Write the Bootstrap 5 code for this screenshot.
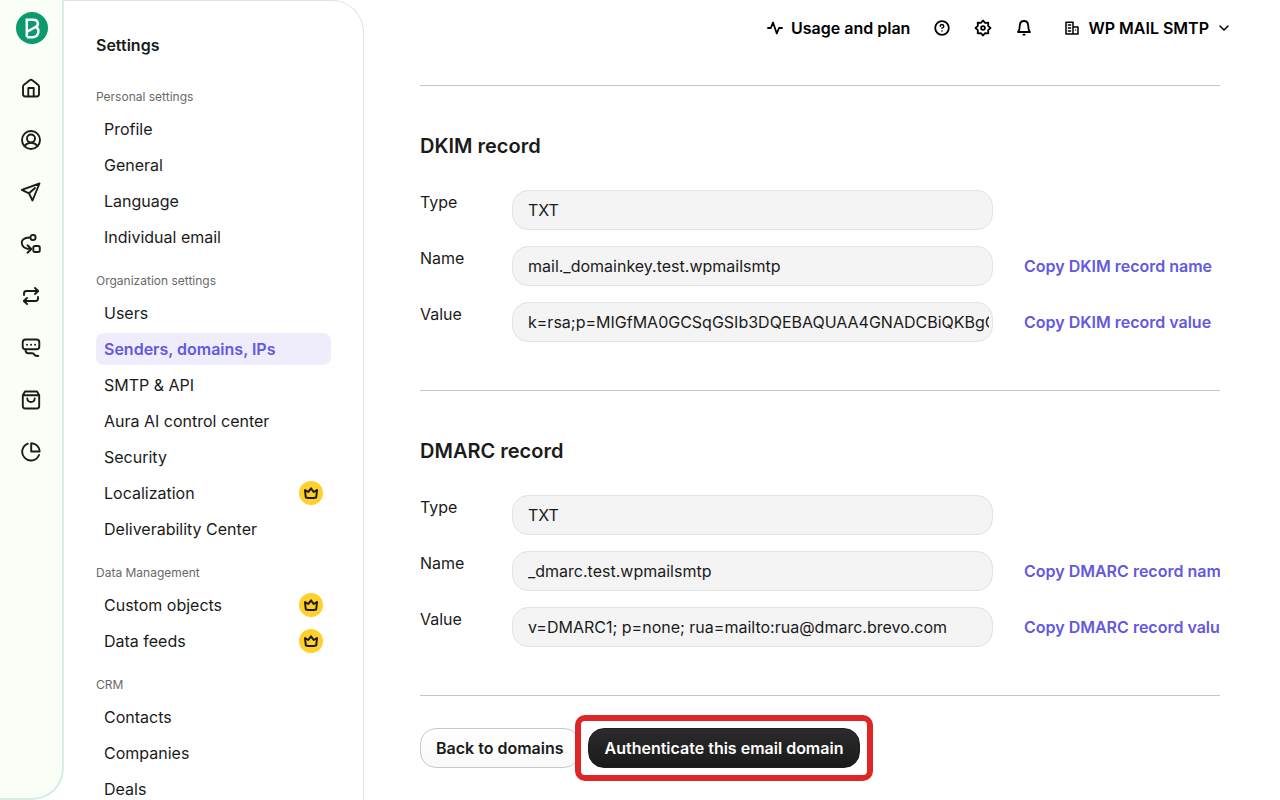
<!DOCTYPE html>
<html lang="en">
<head>
<meta charset="utf-8">
<meta name="viewport" content="width=device-width, initial-scale=1">
<title>Senders, domains, IPs</title>
<link href="https://cdn.jsdelivr.net/npm/bootstrap@5.3.0/dist/css/bootstrap.min.css" rel="stylesheet">
<style>
  body { font-family: Inter, "Liberation Sans", sans-serif; font-size: 16px; line-height: 24px; color: #1b1b1b; background: #fff; }
  svg { display: block; fill: none; stroke: currentColor; stroke-linecap: round; stroke-linejoin: round; }
  a { color: inherit; text-decoration: none; }
  .rail { width: 64px; background: #f9fff6; border: solid #d5ede4; border-width: 0 2px 2px 0; border-radius: 0 0 32px 0; padding: 12px 16px; }
  .rail-nav { gap: 32px; margin-top: 34px; }
  .rail-nav svg { stroke-width: 1.9; }
  .settings { width: 300px; border: solid #e1e1e1; border-width: 1px 1px 0 0; border-radius: 0 32px 0 0; padding: 32px 32px 0; }
  .settings h1 { font-size: 16px; font-weight: 600; line-height: 24px; margin-bottom: 28px; }
  .settings h2 { font-size: 12px; font-weight: 400; line-height: 24px; color: #696969; margin: 0 0 4px; }
  .group { margin-bottom: 16px; gap: 4px; }
  .group .nav-link { height: 32px; padding: 4px 8px; border-radius: 8px; color: #1b1b1b; }
  .group .nav-link.active { background: #efedfc; color: #6358de; font-weight: 600; }
  .crown { width: 24px; height: 24px; background: #ffd02b; }
  .topbar { height: 56px; padding-right: 49px; font-weight: 600; color: #000; }
  .topbar button { background: none; border: 0; padding: 0; color: inherit; font-weight: 600; }
  .topbar svg { stroke-width: 1.8; }
  .tools { gap: 23px; margin: 0 31px 0 23px; }
  .page-body { padding: 29px 60px 0 56px; }
  .rule { border: 0; border-top: 1px solid #bccad6; opacity: 1; margin: 0; }
  .record { padding: 48px 0; }
  .record h2 { font-size: 20px; font-weight: 600; line-height: 24px; margin-bottom: 32px; }
  .fields { gap: 16px; }
  .fields label { flex: 0 0 92px; }
  .fields .form-control { flex: 0 0 481px; height: 40px; background: #f4f4f4; border-color: #e3e3e3; border-radius: 16px; padding: 7px 3px 7px 15px; color: #1b1b1b; }
  .copy { min-width: 0; margin-left: 31px; overflow: hidden; white-space: nowrap; color: #6358de; font-weight: 600; line-height: 40px; }
  .actions { gap: 8px; padding-top: 32px; }
  .actions .btn { height: 40px; border-radius: 16px; font-weight: 600; padding: 7px 15px; }
  .actions .btn-back { border-color: #c8c8c8; background: linear-gradient(#fff, #f9f9f9); color: #1b1b1b; }
  .actions .btn-auth { border-color: #1f1f1f; background: linear-gradient(#2b2b2b, #1a1a1a); color: #fff; padding: 7px 16px; }
  .highlight::before { content: ""; position: absolute; inset: -13px; border: 6px solid #dd2727; border-radius: 10px; background: #fff; }
  .highlight .btn { position: relative; }
</style>
</head>
<body>
<svg class="d-none"><symbol id="crown" viewBox="0 0 16 16"><path d="M2 5 2.800 12.500Q8 13.700 13.200 12.500L14 5 10.700 7 8 3.300 5.300 7Z"/></symbol></svg>
<div class="d-flex vh-100 overflow-hidden">
  <aside class="rail flex-shrink-0">
    <a href="#" aria-label="Brevo" class="d-block"><svg width="32" height="32" viewBox="0 0 32 32"><circle cx="16" cy="16" r="16" fill="#0b996e" stroke="none"/><path d="M10.800 25V7.700H17.500C22.500 7.700 23.300 13.200 19.500 15L10.800 19.800M19 15C24.800 16.700 22.800 25.200 16.500 25.200H10.800" stroke="#fff" stroke-width="2.500" stroke-linejoin="miter" stroke-linecap="butt"/></svg></a>
    <nav class="rail-nav d-flex flex-column align-items-start ps-1">
      <a href="#" aria-label="Home"><svg width="22" height="20" viewBox="0 0 22 20"><path d="M3 8.500V16Q3 18.500 5.500 18.500H16.500Q19 18.500 19 16V8.500Q19 7.700 18.300 7.100L12.300 2.200Q11 1.300 9.700 2.200L3.700 7.100Q3 7.700 3 8.500ZM8.300 18.500V10H13.700V18.500"/></svg></a>
      <a href="#" aria-label="Contacts"><svg width="22" height="20" viewBox="0 0 22 20"><circle cx="11" cy="10" r="9"/><circle cx="11" cy="8.500" r="4"/><path d="M4.500 16Q7 12.700 11 12.700T17.500 16"/></svg></a>
      <a href="#" aria-label="Campaigns"><svg width="22" height="20" viewBox="0 0 22 20"><path d="M19.500 1.500 1.800 7.800 9 11.300 12.500 18.500ZM9 11.300 15 6"/></svg></a>
      <a href="#" aria-label="Automations"><svg width="22" height="20" viewBox="0 0 22 20"><circle cx="13" cy="3.500" r="2.600"/><path d="M10.200 3.500C3.500 3.300 1.500 6.500 1.800 9 2 12.500 4.500 15 10.500 15M7.500 11.300 11.300 15 7.500 18.700"/><rect x="13.300" y="12" width="6.500" height="6" rx="1.800"/></svg></a>
      <a href="#" aria-label="Transactional"><svg width="22" height="20" viewBox="0 0 22 20"><path d="M4 9V7.500Q4 5 6.500 5H18M15 2 18.200 5 15 8M18 11V12.500Q18 15 15.500 15H4M7 12 3.800 15 7 18"/></svg></a>
      <a href="#" aria-label="Conversations"><svg width="22" height="20" viewBox="0 0 22 20"><path d="M5.500 1.500H16.500Q19.300 1.500 19.300 4.300V8.500Q19.300 11.300 16.500 11.300H5.500Q2.700 11.300 2.700 8.500V4.300Q2.700 1.500 5.500 1.500ZM5.500 11.500V12Q5.500 15 8 15.200H12Q14 15.200 14.500 17 15.500 18 18.300 18M7 6.700h.1M11 6.700h.1M15 6.700h.1"/></svg></a>
      <a href="#" aria-label="Commerce"><svg width="22" height="20" viewBox="0 0 22 20"><path d="M2.800 5.200 5 1.500H17L19.200 5.200V16Q19.200 18.500 16.700 18.500H5.300Q2.800 18.500 2.800 16ZM2.800 5.200H19.200M7.300 8.500Q7.500 12 11 12T14.700 8.500"/></svg></a>
      <a href="#" aria-label="Statistics"><svg width="22" height="20" viewBox="0 0 22 20"><path d="M7.800 1.700A8.700 8.700 0 1 0 19 13M11.200 1.300A8.500 8.500 0 0 1 19.700 9.500H11.200Z"/></svg></a>
    </nav>
  </aside>

  <aside class="settings flex-shrink-0 overflow-hidden">
    <h1>Settings</h1>
    <h2>Personal settings</h2>
    <nav class="group nav flex-column">
      <a class="nav-link" href="#">Profile</a>
      <a class="nav-link" href="#">General</a>
      <a class="nav-link" href="#">Language</a>
      <a class="nav-link" href="#">Individual email</a>
    </nav>
    <h2>Organization settings</h2>
    <nav class="group nav flex-column">
      <a class="nav-link" href="#">Users</a>
      <a class="nav-link active" href="#" aria-current="page">Senders, domains, IPs</a>
      <a class="nav-link" href="#">SMTP &amp; API</a>
      <a class="nav-link" href="#">Aura AI control center</a>
      <a class="nav-link" href="#">Security</a>
      <a class="nav-link d-flex justify-content-between" href="#">Localization <span class="crown rounded-circle d-flex align-items-center justify-content-center"><svg width="16" height="16" stroke-width="2"><use href="#crown"/></svg></span></a>
      <a class="nav-link" href="#">Deliverability Center</a>
    </nav>
    <h2>Data Management</h2>
    <nav class="group nav flex-column">
      <a class="nav-link d-flex justify-content-between" href="#">Custom objects <span class="crown rounded-circle d-flex align-items-center justify-content-center"><svg width="16" height="16" stroke-width="2"><use href="#crown"/></svg></span></a>
      <a class="nav-link d-flex justify-content-between" href="#">Data feeds <span class="crown rounded-circle d-flex align-items-center justify-content-center"><svg width="16" height="16" stroke-width="2"><use href="#crown"/></svg></span></a>
    </nav>
    <h2>CRM</h2>
    <nav class="group nav flex-column">
      <a class="nav-link" href="#">Contacts</a>
      <a class="nav-link" href="#">Companies</a>
      <a class="nav-link" href="#">Deals</a>
    </nav>
  </aside>

  <div class="flex-grow-1 overflow-hidden">
    <header class="topbar d-flex align-items-center justify-content-end">
      <button type="button" class="d-flex align-items-center gap-2"><svg width="16" height="16" viewBox="0 0 16 16"><path d="M1 8H3.800L6 2.500 9.800 13.500 12 8H15"/></svg>Usage and plan</button>
      <div class="tools d-flex">
        <button type="button" aria-label="Help"><svg width="18" height="18" viewBox="0 0 18 18"><circle cx="9" cy="9" r="6.800"/><path d="M7.200 7.200Q7.400 5.600 9 5.600 10.800 5.700 10.800 7.200 10.700 8.300 9 9.200M9 12h.1" stroke-width="1.500"/></svg></button>
        <button type="button" aria-label="Configuration"><svg width="18" height="18" viewBox="0 0 18 18" stroke-width="1.600"><path d="M9 1.500 11.100 3.900 14.300 3.700 14.100 6.900 16.500 9 14.100 11.100 14.300 14.300 11.100 14.100 9 16.500 6.900 14.100 3.700 14.300 3.900 11.100 1.500 9 3.900 6.900 3.700 3.700 6.900 3.900Z"/><circle cx="9" cy="9" r="1.900"/></svg></button>
        <button type="button" aria-label="Notifications"><svg width="18" height="18" viewBox="0 0 18 18"><path d="M3 13Q4.800 11 4.800 6.500 5 2 9 2T13.200 6.500Q13.200 11 15 13ZM8.300 15.700H9.700"/></svg></button>
      </div>
      <button type="button" class="d-flex align-items-center"><svg class="me-2" width="16" height="16" viewBox="0 0 16 16"><path d="M2 14V2.300H9V14M9 7H14V14M2 14H14" stroke-width="1.500"/><path d="M4.300 5H6.700M4.300 8H6.700M4.300 11H6.700M11.700 10v.1" stroke-width="1.300"/></svg>WP MAIL SMTP<svg class="ms-2" width="14" height="14" viewBox="0 0 14 14"><path d="M3 5 7 9 11 5" stroke-width="1.500"/></svg></button>
    </header>

    <main class="page-body">
      <hr class="rule">
      <section class="record">
        <h2>DKIM record</h2>
        <div class="fields d-flex flex-column">
          <div class="d-flex"><label for="dkim-type">Type</label><input id="dkim-type" class="form-control" readonly value="TXT"></div>
          <div class="d-flex"><label for="dkim-name">Name</label><input id="dkim-name" class="form-control" readonly value="mail._domainkey.test.wpmailsmtp"><a class="copy" href="#">Copy DKIM record name</a></div>
          <div class="d-flex"><label for="dkim-value">Value</label><input id="dkim-value" class="form-control" readonly value="k=rsa;p=MIGfMA0GCSqGSIb3DQEBAQUAA4GNADCBiQKBgQC"><a class="copy" href="#">Copy DKIM record value</a></div>
        </div>
      </section>
      <hr class="rule">
      <section class="record">
        <h2>DMARC record</h2>
        <div class="fields d-flex flex-column">
          <div class="d-flex"><label for="dmarc-type">Type</label><input id="dmarc-type" class="form-control" readonly value="TXT"></div>
          <div class="d-flex"><label for="dmarc-name">Name</label><input id="dmarc-name" class="form-control" readonly value="_dmarc.test.wpmailsmtp"><a class="copy" href="#">Copy DMARC record nam</a></div>
          <div class="d-flex"><label for="dmarc-value">Value</label><input id="dmarc-value" class="form-control" readonly value="v=DMARC1; p=none; rua=mailto:rua@dmarc.brevo.com"><a class="copy" href="#">Copy DMARC record valu</a></div>
        </div>
      </section>
      <hr class="rule">
      <div class="actions d-flex">
        <button type="button" class="btn btn-back">Back to domains</button>
        <div class="highlight position-relative"><button type="button" class="btn btn-auth">Authenticate this email domain</button></div>
      </div>
    </main>
  </div>
</div>
<script src="https://cdn.jsdelivr.net/npm/bootstrap@5.3.0/dist/js/bootstrap.bundle.min.js"></script>
</body>
</html>
